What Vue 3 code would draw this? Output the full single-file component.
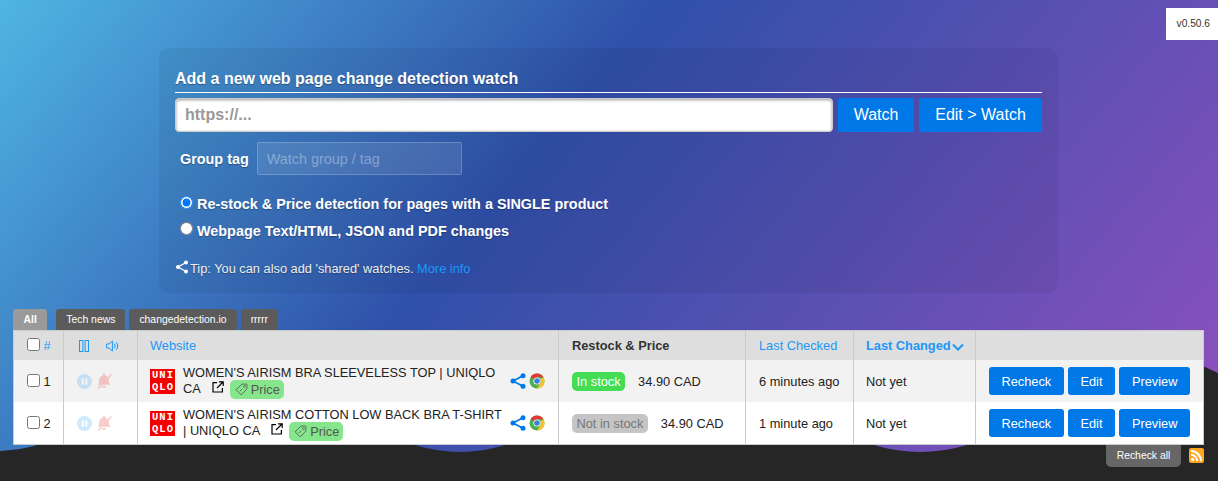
<script setup>
const tabs = ['Tech news', 'changedetection.io', 'rrrrr']
const rows = [
  { n: 1, title: "WOMEN'S AIRISM BRA SLEEVELESS TOP | UNIQLO CA", inStock: true, checked: '6 minutes ago' },
  { n: 2, title: "WOMEN'S AIRISM COTTON LOW BACK BRA T-SHIRT | UNIQLO CA", inStock: false, checked: '1 minute ago' },
]
</script>

<template>
  <div class="page">
    <svg class="wave" viewBox="0 0 1218 481" aria-hidden="true">
      <path d="M0 451 C15 450 28 448 40 444 L60 430 L400 430 L415 445 Q460 459 505 445 L530 430 L860 430 L874 445 Q920 459 967 445 L980 430 L1190 360 L1218 373 V481 H0 Z" fill="#262626" />
    </svg>
    <div class="version">v0.50.6</div>

    <main class="content">
      <form class="panel" @submit.prevent>
        <div class="legend">Add a new web page change detection watch</div>
        <div class="url-row">
          <input class="url" type="text" placeholder="https://..." />
          <button class="btn big watch-btn" type="button">Watch</button>
          <button class="btn big edit-btn" type="button">Edit &gt; Watch</button>
        </div>
        <div class="tag-row">
          <label class="tag-label">Group tag</label>
          <input class="tag-input" type="text" placeholder="Watch group / tag" />
        </div>
        <div class="radios">
          <label class="radio"><input type="radio" name="proc" checked /><span>Re-stock &amp; Price detection for pages with a SINGLE product</span></label>
          <label class="radio"><input type="radio" name="proc" /><span>Webpage Text/HTML, JSON and PDF changes</span></label>
        </div>
        <div class="tip">
          <svg class="tip-share" viewBox="0 0 14 14" aria-hidden="true">
            <path d="M11 2.500 3 7l8 4.500" fill="none" stroke="#fff" stroke-width="1.300" />
            <circle cx="11" cy="2.500" r="2" fill="#fff" />
            <circle cx="3" cy="7" r="2" fill="#fff" />
            <circle cx="11" cy="11.500" r="2" fill="#fff" />
          </svg>
          <span>Tip: You can also add 'shared' watches. <a href="#" class="more">More info</a></span>
        </div>
      </form>

      <nav class="tabs">
        <a class="tab active" href="#">All</a>
        <a v-for="t in tabs" :key="t" class="tab" href="#">{{ t }}</a>
      </nav>

      <table class="watches">
        <colgroup>
          <col class="c1" /><col class="c2" /><col class="c3" /><col class="c4" /><col class="c5" /><col class="c6" /><col class="c7" />
        </colgroup>
        <thead>
          <tr>
            <th class="num"><input type="checkbox" /> <a href="#" class="hl">#</a></th>
            <th class="state-head">
              <div class="state-icons">
                <svg class="ic-pause" viewBox="0 0 10 12" aria-hidden="true">
                  <rect x="0.500" y="0.500" width="3.400" height="11" fill="none" stroke="#1b98f8" />
                  <rect x="6.100" y="0.500" width="3.400" height="11" fill="none" stroke="#1b98f8" />
                </svg>
                <svg class="ic-sound" viewBox="0 0 14 12" aria-hidden="true">
                  <path d="M.6 4h2.400L6.400 1v10L3 8H.6z" fill="none" stroke="#1b98f8" stroke-linejoin="round" />
                  <path d="M8.400 4a2.800 2.800 0 0 1 0 4M10.400 2.400a5.200 5.200 0 0 1 0 7.200" fill="none" stroke="#1b98f8" stroke-linecap="round" />
                </svg>
              </div>
            </th>
            <th class="site-head"><a href="#" class="hl">Website</a></th>
            <th class="strong dark">Restock &amp; Price</th>
            <th class="tight"><a href="#" class="hl">Last Checked</a></th>
            <th class="strong changed-head">
              <a href="#" class="hl changed">Last Changed<svg class="chev" viewBox="0 0 12 8" aria-hidden="true"><path d="M1 1.500 6 6.500 11 1.500" fill="none" stroke="#1b98f8" stroke-width="2" /></svg></a>
            </th>
            <th></th>
          </tr>
        </thead>
        <tbody>
          <tr v-for="r in rows" :key="r.n" :class="{ odd: r.n === 1 }">
            <td class="num"><input type="checkbox" /> {{ r.n }}</td>
            <td>
              <div class="state-row">
                <svg class="ic-circle" viewBox="0 0 16 16" aria-hidden="true">
                  <circle cx="8" cy="8" r="8" fill="#1b98f8" />
                  <rect x="5" y="4.500" width="2.200" height="7" rx=".6" fill="#fff" />
                  <rect x="8.800" y="4.500" width="2.200" height="7" rx=".6" fill="#fff" />
                </svg>
                <svg class="ic-bell" viewBox="0 0 16 16" aria-hidden="true">
                  <path d="M8 .6a1 1 0 0 1 1 1v.8c2.500.5 3.800 2.500 3.800 5 0 2.200.7 3.300 1.700 4.300H1.500c1-1 1.700-2.100 1.700-4.300 0-2.500 1.300-4.500 3.800-5v-.8a1 1 0 0 1 1-1z" fill="#e53935" />
                  <path d="M6 13h4a2 2 0 0 1-4 0z" fill="#e53935" />
                  <path d="M15.500 1.500 2 15.500" stroke="#e53935" stroke-width="1.400" />
                </svg>
              </div>
            </td>
            <td class="site">
              <div class="site-row">
                <div class="logo"><span>UNI</span><span>QLO</span></div>
                <div class="title">
                  {{ r.title }}
                  <svg class="ext" viewBox="0 0 12 12" aria-hidden="true">
                    <path d="M5 1.600H1v9.400h9.400V7" fill="none" stroke="#000" stroke-width="1.200" />
                    <path d="M5 7 11 1M7 .8h4.200V5" fill="none" stroke="#000" stroke-width="1.200" />
                  </svg>
                  <span class="price-tag">
                    <svg class="tag-ic" viewBox="0 0 14 14" aria-hidden="true">
                      <path d="M7.500 1.200h5.300v5.300L6.700 12.800 1.200 7.300z" fill="none" stroke="#555" stroke-width=".9" stroke-linejoin="round" />
                      <circle cx="10.200" cy="3.800" r="1" fill="none" stroke="#555" stroke-width=".8" />
                      <path d="M5.200 8.800 8 6" stroke="#555" stroke-width=".9" />
                    </svg>Price
                  </span>
                </div>
                <div class="site-icons">
                  <svg class="ic-share" viewBox="0 0 16 16" aria-hidden="true">
                    <path d="M13 2.800 3 8l10 5.200" fill="none" stroke="#0078e7" stroke-width="1.700" />
                    <circle cx="13" cy="2.800" r="2.500" fill="#0078e7" />
                    <circle cx="3" cy="8" r="2.500" fill="#0078e7" />
                    <circle cx="13" cy="13.200" r="2.500" fill="#0078e7" />
                  </svg>
                  <svg class="ic-chrome" viewBox="0 0 16 16" aria-hidden="true">
                    <circle cx="8" cy="8" r="7.500" fill="#4caf50" />
                    <path d="M8 .5a7.500 7.500 0 0 1 6.500 3.750H8A3.750 3.750 0 0 0 4.750 6.100L1.500 4.250A7.500 7.500 0 0 1 8 .5z" fill="#e53935" />
                    <path d="M14.500 4.250A7.500 7.500 0 0 1 8 15.500l3.250-5.600A3.750 3.750 0 0 0 11.250 6.100z" fill="#fbc02d" />
                    <circle cx="8" cy="8" r="3.600" fill="#fff" />
                    <circle cx="8" cy="8" r="2.800" fill="#3f7fdc" />
                  </svg>
                </div>
              </div>
            </td>
            <td>
              <span class="stock" :class="r.inStock ? 'in' : 'out'">{{ r.inStock ? 'In stock' : 'Not in stock' }}</span>
              <span class="price">34.90 CAD</span>
            </td>
            <td class="tight">{{ r.checked }}</td>
            <td class="changed-cell">Not yet</td>
            <td class="actions">
              <div class="action-row">
                <button class="btn small recheck" type="button">Recheck</button>
                <button class="btn small edit" type="button">Edit</button>
                <button class="btn small preview" type="button">Preview</button>
              </div>
            </td>
          </tr>
        </tbody>
      </table>

      <div class="foot">
        <a href="#" class="recheck-all">Recheck all</a>
        <svg class="rss" viewBox="0 0 15 15" aria-hidden="true">
          <rect width="15" height="15" rx="2" fill="#ffa51f" />
          <circle cx="3.600" cy="11.400" r="1.700" fill="#fff" />
          <path d="M2 6.800a6.200 6.200 0 0 1 6.200 6.200M2 3a10 10 0 0 1 10 10" fill="none" stroke="#fff" stroke-width="2" />
        </svg>
      </div>
    </main>
  </div>
</template>

<style>
html, body { margin: 0; background: #262626; }
</style>

<style scoped>
.page {
  position: relative;
  width: 1218px;
  height: 481px;
  overflow: hidden;
  font-family: "Liberation Sans", Arial, sans-serif;
  font-size: 12.8px;
  color: #222;
  background: linear-gradient(130deg, #5ad8f7 -14%, #2f50a9 41%, #9150bf 100%);
}
.wave {
  position: absolute;
  left: 0;
  top: 0;
  width: 1218px;
  height: 481px;
}
.version {
  position: absolute;
  right: 0;
  top: 8px;
  box-sizing: border-box;
  width: 52px;
  height: 32px;
  padding-right: 8px;
  line-height: 31px;
  background: #fff;
  font-size: 10.2px;
  text-align: right;
  color: #333;
}
.content {
  position: relative;
  padding: 48px 14px 0 13px;
  display: flex;
  flex-direction: column;
}
.panel {
  align-self: center;
  box-sizing: border-box;
  width: 899px;
  height: 245px;
  padding: 16px;
  border-radius: 10px;
  background: rgba(0, 0, 0, 0.05);
  color: #fff;
}
.legend {
  padding-top: 2px;
  font-size: 16px;
  font-weight: bold;
  line-height: 26px;
  border-bottom: 1px solid #fff;
  text-shadow: 0 1px 1px rgba(0, 0, 0, 0.3);
}
.url-row {
  display: flex;
  gap: 5px;
  margin-top: 5px;
}
.url {
  box-sizing: border-box;
  flex: 1;
  min-width: 0;
  height: 34px;
  padding: 0 9px;
  border: 1px solid #ccc;
  border-radius: 4px;
  box-shadow: inset 0 1px 3px #999;
  background: #fff;
  font: bold 16px "Liberation Sans", Arial, sans-serif;
  outline: none;
}
.url::placeholder { color: #999; }
.btn {
  border: 0;
  border-radius: 2px;
  background: #0078e7;
  color: #fff;
  font-family: "Liberation Sans", Arial, sans-serif;
  padding: 0;
  cursor: pointer;
}
.big { height: 34px; font-size: 16px; }
.watch-btn { width: 76px; }
.edit-btn { width: 123px; }
.tag-row {
  display: flex;
  align-items: center;
  gap: 8px;
  margin-top: 10px;
  padding-left: 5px;
}
.tag-label {
  font-size: 14.4px;
  font-weight: bold;
  text-shadow: 0 1px 1px rgba(0, 0, 0, 0.3);
}
.tag-input {
  box-sizing: border-box;
  width: 205px;
  height: 33px;
  padding: 0 9px;
  border: 1px solid rgba(255, 255, 255, 0.2);
  border-radius: 2px;
  background: rgba(255, 255, 255, 0.1);
  color: #fff;
  font: 14.4px "Liberation Sans", Arial, sans-serif;
  outline: none;
}
.tag-input::placeholder { color: rgba(255, 255, 255, 0.35); }
.radios {
  display: flex;
  flex-direction: column;
  gap: 9px;
  margin-top: 20px;
  padding-left: 5px;
}
.radio {
  display: flex;
  align-items: center;
  gap: 4px;
  height: 18px;
  font-size: 14.4px;
  font-weight: bold;
  text-shadow: 0 1px 1px rgba(0, 0, 0, 0.3);
}
.radio input { margin: 0; width: 13px; height: 13px; position: relative; top: -2px; }
.radio:last-child input { top: -3px; }
.tip {
  display: flex;
  align-items: center;
  margin-top: 20px;
  height: 16px;
  font-size: 12.8px;
  color: #eee;
  text-shadow: 0 1px 1px rgba(0, 0, 0, 0.3);
}
.tip-share { width: 14px; height: 14px; margin-right: 1px; margin-top: -3px; }
.more { color: #1b98f8; text-decoration: none; text-shadow: none; }
.tabs {
  display: flex;
  gap: 4px;
  margin-top: 16px;
  height: 21px;
}
.tab {
  padding: 0 10px;
  background: #5b5b5b;
  color: #fff;
  font-size: 10.4px;
  line-height: 21px;
  border-radius: 3px 3px 0 0;
  text-decoration: none;
}
.tab.active {
  padding: 0 10.5px;
  background: #9a9a9a;
  font-weight: bold;
  margin-right: 5px;
}
.watches {
  box-sizing: border-box;
  width: 1191px;
  table-layout: fixed;
  border-collapse: separate;
  border-spacing: 0;
  border: 1px solid #cbcbcb;
  background: #fff;
}
.c1 { width: 49px; }
.c2 { width: 74px; }
.c3 { width: 421px; }
.c4 { width: 187px; }
.c5 { width: 108px; }
.c6 { width: 122px; }
.c7 { width: 228px; }
th, td {
  box-sizing: border-box;
  padding: 0 13px;
  border-left: 1px solid #cbcbcb;
  font-size: 12.8px;
  font-weight: normal;
  text-align: left;
  vertical-align: middle;
  white-space: nowrap;
}
th:first-child, td:first-child { border-left: 0; }
th {
  height: 29px;
  background: #dedede;
}
td { height: 42px; color: #222; }
tr.odd td { background: #f2f2f2; }
.num { padding-right: 0; }
.site-head { padding-left: 12px; }
.tight { padding-right: 0; }
.changed-head, .changed-cell { padding: 0 0 0 12px; }
.hl { color: #1b98f8; text-decoration: none; }
.strong { font-weight: bold; }
.strong .hl { font-weight: bold; }
.dark { color: #333; }
.changed { display: inline-flex; align-items: center; }
.chev { width: 12px; height: 8px; margin-left: 1px; margin-top: 3px; }
.state-head { padding-left: 15px; }
.state-icons { display: flex; align-items: center; gap: 17px; }
.ic-pause { width: 10px; height: 12px; }
.ic-sound { width: 14px; height: 12px; }
.state-row { display: flex; align-items: center; gap: 4px; }
.ic-circle { width: 15px; height: 15px; opacity: 0.2; flex: none; }
.ic-bell { width: 16px; height: 16px; opacity: 0.25; flex: none; }
input[type="checkbox"] { margin: 0; vertical-align: -1px; }
.site { padding: 0 0 0 12px; }
.site-row { display: flex; align-items: center; }
.logo {
  flex: none;
  width: 25px;
  height: 25px;
  margin-right: 8px;
  background: #f40000;
  color: #fff;
  font: bold 10.5px/12px "Liberation Mono", monospace;
  letter-spacing: 1px;
  display: flex;
  flex-direction: column;
  align-items: center;
  justify-content: center;
}
.logo span { display: block; padding-left: 1px; }
.title {
  width: 322px;
  flex: none;
  margin-top: 1px;
  line-height: 15px;
  color: #222;
  white-space: normal;
}
.ext { width: 12px; height: 12px; margin-left: 8px; vertical-align: -1px; }
.price-tag {
  display: inline-flex;
  align-items: center;
  margin-left: 6px;
  height: 19px;
  padding: 0 4px 0 5px;
  border-radius: 5px;
  background: #86e68c;
  color: #555;
  vertical-align: middle;
}
.tag-ic { width: 13px; height: 13px; margin-right: 3px; }
.site-icons { display: flex; align-items: center; gap: 3px; margin-left: 5px; }
.ic-share { width: 16px; height: 16px; }
.ic-chrome { width: 16px; height: 16px; }
.stock {
  display: inline-block;
  padding: 0 4.5px;
  height: 19px;
  line-height: 19px;
  border-radius: 5px;
}
.stock.in { background: #42dd53; color: #fff; }
.stock.out { background: #c5c5c5; color: #777; }
.price { margin-left: 13px; }
.actions { padding: 0 13px; }
.action-row { display: flex; gap: 4px; }
.small { height: 28px; font-size: 12.8px; border-radius: 3px; }
.recheck { width: 75px; }
.edit { width: 48px; }
.preview { width: 71px; }
.foot {
  display: flex;
  justify-content: flex-end;
  align-items: flex-start;
  gap: 8px;
  width: 1191px;
}
.recheck-all {
  width: 75px;
  height: 22px;
  line-height: 22px;
  text-align: center;
  background: #666;
  color: #fff;
  font-size: 10.4px;
  border-radius: 0 0 5px 5px;
  text-decoration: none;
}
.rss { width: 15px; height: 15px; margin-top: 3px; }
</style>
